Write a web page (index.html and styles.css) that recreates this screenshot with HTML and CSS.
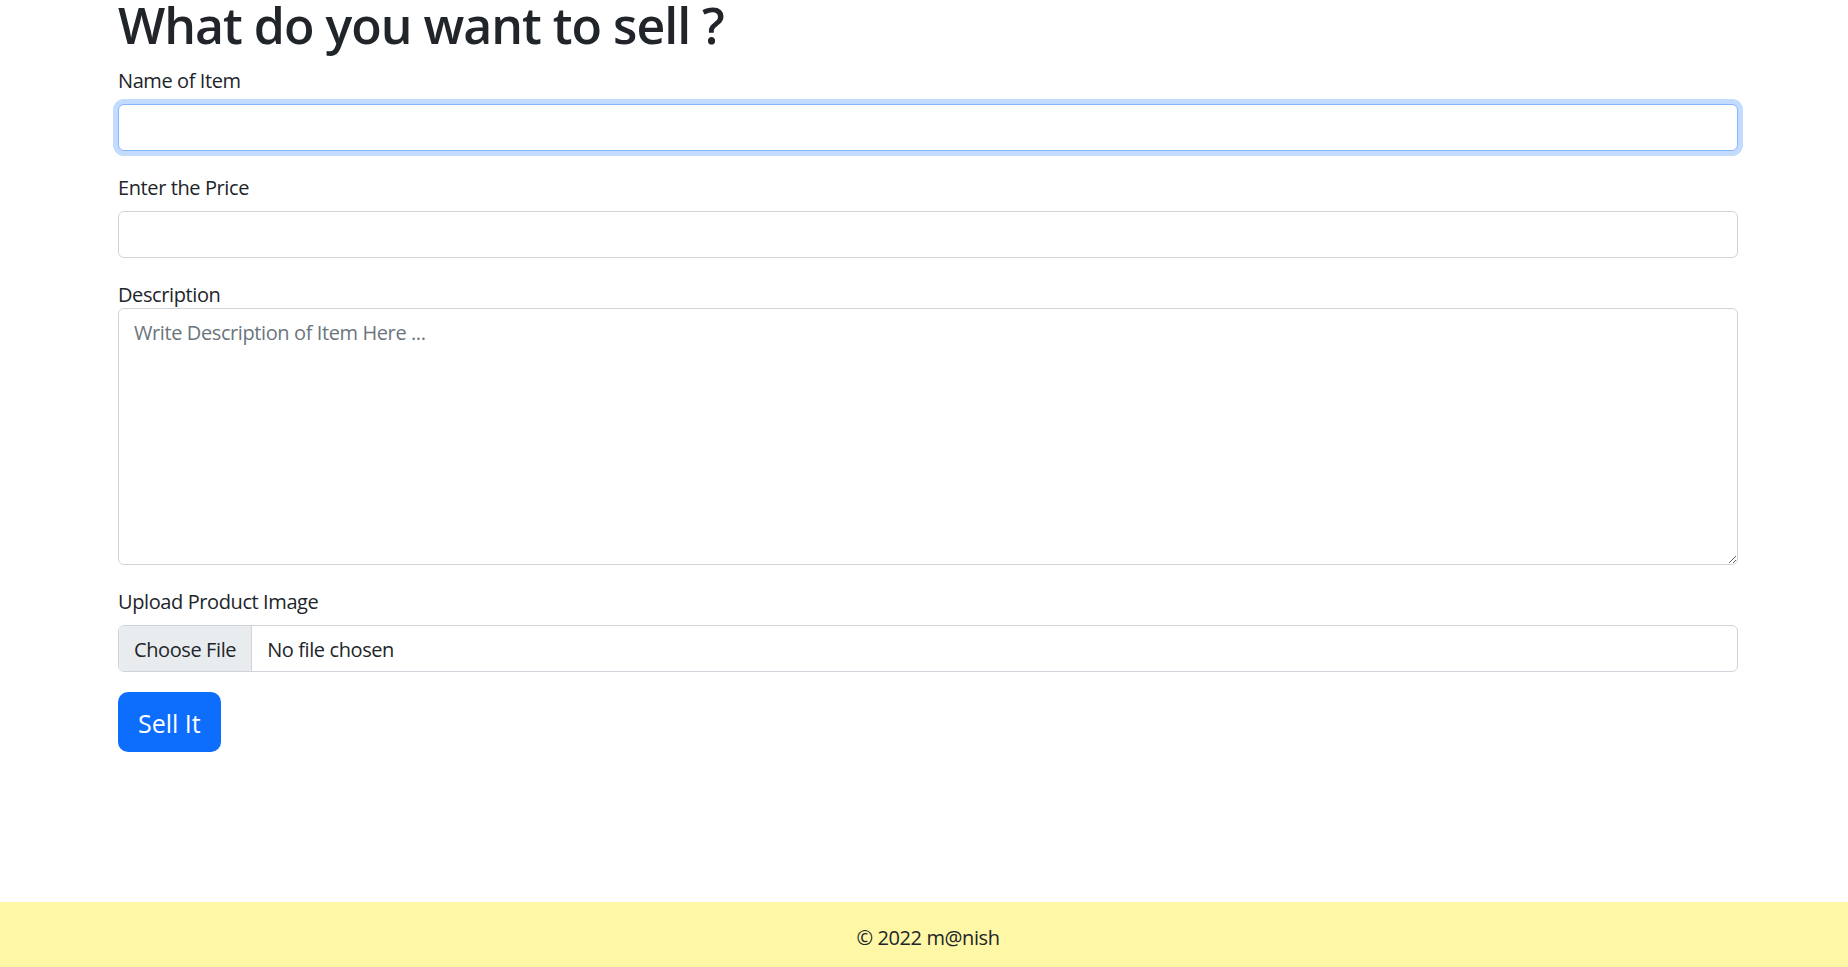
FILE: index.html
```html
<!DOCTYPE html>
<html lang="en">
<head>
<meta charset="utf-8">
<title>Sell</title>
<link rel="stylesheet" href="styles.css">
</head>
<body>
<main class="container">
  <h1 class="title">What do you want to sell ?</h1>
  <form class="sell-form">
    <div class="field">
      <label class="form-label" for="name">Name of Item</label>
      <input class="form-control is-focused" id="name" type="text">
    </div>
    <div class="field">
      <label class="form-label" for="price">Enter the Price</label>
      <input class="form-control" id="price" type="text">
    </div>
    <div class="field">
      <label class="plain-label" for="desc">Description</label>
      <textarea class="form-control textarea" id="desc" placeholder="Write Description of Item Here ..."></textarea>
    </div>
    <div class="field">
      <label class="form-label">Upload Product Image</label>
      <div class="file-input">
        <span class="file-btn">Choose File</span>
        <span class="file-name">No file chosen</span>
      </div>
    </div>
    <button class="btn-primary" type="button">Sell It</button>
  </form>
</main>
<footer class="footer">© 2022 m@nish</footer>
</body>
</html>
```
FILE: styles.css
```css
html, body {
  margin: 0;
  padding: 0;
}
body {
  font-family: "Open Sans", "Noto Sans", sans-serif;
  font-size: 20px;
  line-height: 30px;
  color: #212529;
  background: #fff;
  min-height: 100vh;
  display: flex;
  flex-direction: column;
  letter-spacing: -0.4px;
}
.container {
  flex: 1;
  width: 1620px;
  margin-left: 118px;
}
.title {
  margin: -5px 0 9px;
  font-size: 50px;
  line-height: 60px;
  font-weight: 600;
  letter-spacing: -1px;
}
.sell-form {
  display: flex;
  flex-direction: column;
  align-items: flex-start;
}
.field {
  width: 100%;
  margin-bottom: 20px;
}
.form-label {
  display: block;
  padding-top: 2px;
  margin-bottom: 8px;
}
.plain-label {
  display: block;
  padding-top: 2px;
  margin-bottom: -2px;
}
.form-control {
  display: block;
  box-sizing: border-box;
  width: 100%;
  height: 47px;
  margin: 0;
  padding: 8px 15px 6px;
  font: inherit;
  letter-spacing: inherit;
  color: #212529;
  background: #fff;
  border: 1px solid #ced4da;
  border-radius: 6px;
  outline: none;
}
.is-focused {
  border-color: #86b7fe;
  box-shadow: 0 0 0 5px rgba(13, 110, 253, 0.25);
}
.textarea {
  height: 257px;
  padding-top: 9px;
  resize: vertical;
}
.textarea::placeholder {
  color: #6c757d;
  opacity: 1;
}
.file-input {
  box-sizing: border-box;
  display: flex;
  align-items: stretch;
  height: 47px;
  border: 1px solid #ced4da;
  border-radius: 6px;
  overflow: hidden;
}
.file-btn {
  display: flex;
  align-items: center;
  padding: 2px 15px 0;
  background: #e9ecef;
  border-right: 1px solid #ced4da;
}
.file-name {
  display: flex;
  align-items: center;
  padding: 2px 0 0 15px;
}
.btn-primary {
  font: inherit;
  font-size: 25px;
  line-height: 37px;
  letter-spacing: 0;
  padding: 13px 20px 10px;
  color: #fff;
  background: #0d6efd;
  border: 0;
  border-radius: 10px;
  cursor: pointer;
}
.footer {
  background: #fef7a6;
  text-align: center;
  padding: 21px 0 14px 8px;
}
```
